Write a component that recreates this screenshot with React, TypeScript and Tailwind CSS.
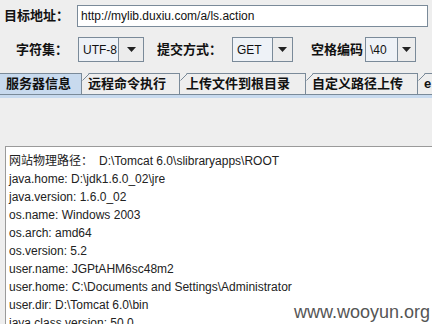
import React from "react";

const CJK = "font-['Liberation_Sans','Noto_Sans_CJK_SC',sans-serif]";

const LINES = [
  "java.home: D:\\jdk1.6.0_02\\jre",
  "java.version: 1.6.0_02",
  "os.name: Windows 2003",
  "os.arch: amd64",
  "os.version: 5.2",
  "user.name: JGPtAHM6sc48m2",
  "user.home: C:\\Documents and Settings\\Administrator",
  "user.dir: D:\\Tomcat 6.0\\bin",
  "java.class.version: 50.0",
];

const TABS = [
  { label: "服务器信息", w: "w-[82px]", active: true },
  { label: "远程命令执行", w: "w-[98px]" },
  { label: "上传文件到根目录", w: "w-[126px]" },
  { label: "自定义路径上传", w: "w-[112px]" },
  { label: "e", w: "w-[30px]" },
];

function Arrow() {
  return (
    <svg width="9" height="5" viewBox="0 0 9 5">
      <path d="M0 0h9L4.5 5z" fill="#222" />
    </svg>
  );
}

function Combo({ value, valueW, arrowW }: { value: string; valueW: string; arrowW: string }) {
  return (
    <div className="flex h-[25px] border border-[#7a8a99]">
      <div className={`${valueW} flex items-center bg-[#eef2f7] pl-[4px] text-[12px] text-[#111]`}>{value}</div>
      <div className={`${arrowW} flex items-center justify-center border-l border-[#7a8a99] bg-[#ececec]`}>
        <Arrow />
      </div>
    </div>
  );
}

export default function App() {
  return (
    <div className={`relative h-[324px] w-[432px] overflow-hidden bg-[#eeeeee] ${CJK}`}>
      {/* 目标地址 */}
      <div className="flex items-center pl-[4px] pr-[4px] pt-[5px]">
        <span className="w-[73px] text-[13px] font-bold text-[#111]">目标地址：</span>
        <div className="flex h-[22px] flex-1 items-center border border-[#7a8a99] bg-white pl-[3px] text-[12px] text-[#111]">
          http://mylib.duxiu.com/a/ls.action
        </div>
      </div>

      {/* 字符集 / 提交方式 / 空格编码 */}
      <div className="mt-[10px] flex items-center pl-[16px]">
        <span className="w-[62px] text-[13px] font-bold text-[#111]">字符集：</span>
        <Combo value="UTF-8" valueW="w-[39px]" arrowW="w-[25px]" />
        <span className="ml-[13px] w-[75px] text-[13px] font-bold text-[#111]">提交方式：</span>
        <Combo value="GET" valueW="w-[39px]" arrowW="w-[20px]" />
        <span className="ml-[18px] w-[54px] text-[13px] font-bold text-[#111]">空格编码</span>
        <Combo value="\40" valueW="w-[31px]" arrowW="w-[18px]" />
      </div>

      {/* tabs */}
      <div className="mt-[11px] flex h-[21px]">
        {TABS.map((t, i) => (
          <div
            key={i}
            className={`${t.w} relative flex shrink-0 items-center border-t border-r border-[#7a8a99] pl-[6px] text-[13px] font-bold text-[#111] ${
              t.active ? "bg-[#c8daee]" : "bg-[#eeeeee]"
            }`}
          >
            {!t.active && (
              <svg className="absolute -top-px left-0" width="8" height="8" viewBox="0 0 8 8">
                <path d="M0 0h7L0 7z" fill="#eeeeee" />
                <path d="M0.5 7.5L7.5 0.5" stroke="#7a8a99" strokeWidth="1" />
              </svg>
            )}
            {t.label}
          </div>
        ))}
      </div>
      <div className="h-[1px] bg-[#7a8a99]" />
      <div className="h-[3px] bg-[#c8daee]" />

      {/* output */}
      <div className="ml-[5px] mt-[48px] border-l border-t border-[#9a9a9a] bg-white pl-[3px] pt-[5px] text-[12px] leading-[18px] text-[#222]">
        <div>
          网站物理路径：<span className="ml-[6px]">D:\Tomcat 6.0\slibraryapps\ROOT</span>
        </div>
        {LINES.map((l) => (
          <div key={l}>{l}</div>
        ))}
      </div>

      <div className="absolute right-[2px] top-[299px] font-['Liberation_Sans',sans-serif] text-[18px] text-[#555]">
        www.wooyun.org
      </div>
    </div>
  );
}
